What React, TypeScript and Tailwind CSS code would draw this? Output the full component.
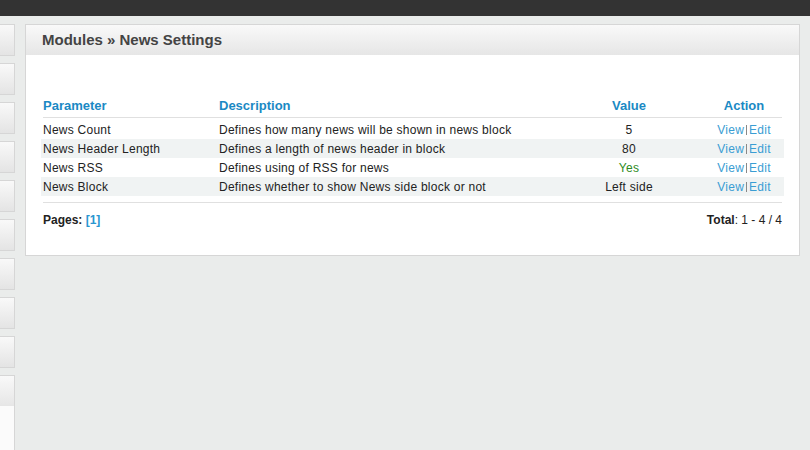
const rows = [
  { param: "News Count", desc: "Defines how many news will be shown in news block", value: "5", green: false },
  { param: "News Header Length", desc: "Defines a length of news header in block", value: "80", green: false },
  { param: "News RSS", desc: "Defines using of RSS for news", value: "Yes", green: true },
  { param: "News Block", desc: "Defines whether to show News side block or not", value: "Left side", green: false },
];

export default function App() {
  return (
    <div className="h-screen overflow-hidden bg-[#eaeceb] font-['Liberation_Sans',Arial,sans-serif] text-[12px] text-[#222]">
      {/* top bar */}
      <div className="h-4 bg-[#333333]"></div>

      <div className="flex gap-[10px] pt-2 pr-[10px]">
        {/* side menu (cut off) */}
        <div className="flex w-[15px] shrink-0 flex-col gap-[7px]">
          {[0, 1, 2, 3, 4, 5, 6, 7, 8].map((i) => (
            <div key={i} className="h-8 border-y border-r border-[#d6d6d6] bg-gradient-to-b from-[#f9f9f9] to-[#e4e4e4]"></div>
          ))}
          <div className="h-[80px] border-t border-r border-[#d6d6d6] bg-[linear-gradient(to_bottom,#f9f9f9,#e6e6e6_30px,#fbfbfb_30px)]"></div>
        </div>

        {/* main panel */}
        <div className="flex-1 self-start border border-[#d6d6d6] bg-white">
          <div className="flex h-[30px] items-center bg-gradient-to-b from-[#f9f9f9] to-[#e6e6e6] pl-4 pt-px">
            <h1 className="text-[15px] font-bold text-[#444]">Modules » News Settings</h1>
          </div>

          <div className="px-[15px] pt-[41px]">
            <div className="grid h-[21px] grid-cols-[176px_336px_152px_78px] items-center pb-[2px] text-[13px] font-bold text-[#1a89c4]">
              <div className="pl-[2px]">Parameter</div>
              <div className="pl-[2px]">Description</div>
              <div className="text-center">Value</div>
              <div className="text-center">Action</div>
            </div>
            <div className="mx-[2px] h-px bg-[#e0e0e0]"></div>

            <div className="pt-[2px] tracking-[0.25px]">
              {rows.map((r, i) => (
                <div
                  key={r.param}
                  className={`grid h-[19px] grid-cols-[176px_336px_152px_78px] items-center ${i % 2 === 1 ? "bg-[#f0f3f3]" : ""}`}
                >
                  <div className="pl-[2px]">{r.param}</div>
                  <div className="pl-[2px]">{r.desc}</div>
                  <div className={`text-center ${r.green ? "text-[#2e8b22]" : ""}`}>{r.value}</div>
                  <div className="flex items-center justify-center text-[#3a9dd3]">
                    <span>View</span>
                    <span className="mx-[2px] inline-block h-[10px] w-px bg-[#888]"></span>
                    <span>Edit</span>
                  </div>
                </div>
              ))}
            </div>

            <div className="mx-[2px] mt-[6px] h-px bg-[#e0e0e0]"></div>

            <div className="flex h-[33px] items-center justify-between px-[2px]">
              <div>
                <span className="font-bold">Pages: </span>
                <span className="font-bold text-[#2a96d0]">[1]</span>
              </div>
              <div>
                <span className="font-bold">Total</span>: 1 - 4 / 4
              </div>
            </div>
            <div className="h-[19px]"></div>
          </div>
        </div>
      </div>
    </div>
  );
}
